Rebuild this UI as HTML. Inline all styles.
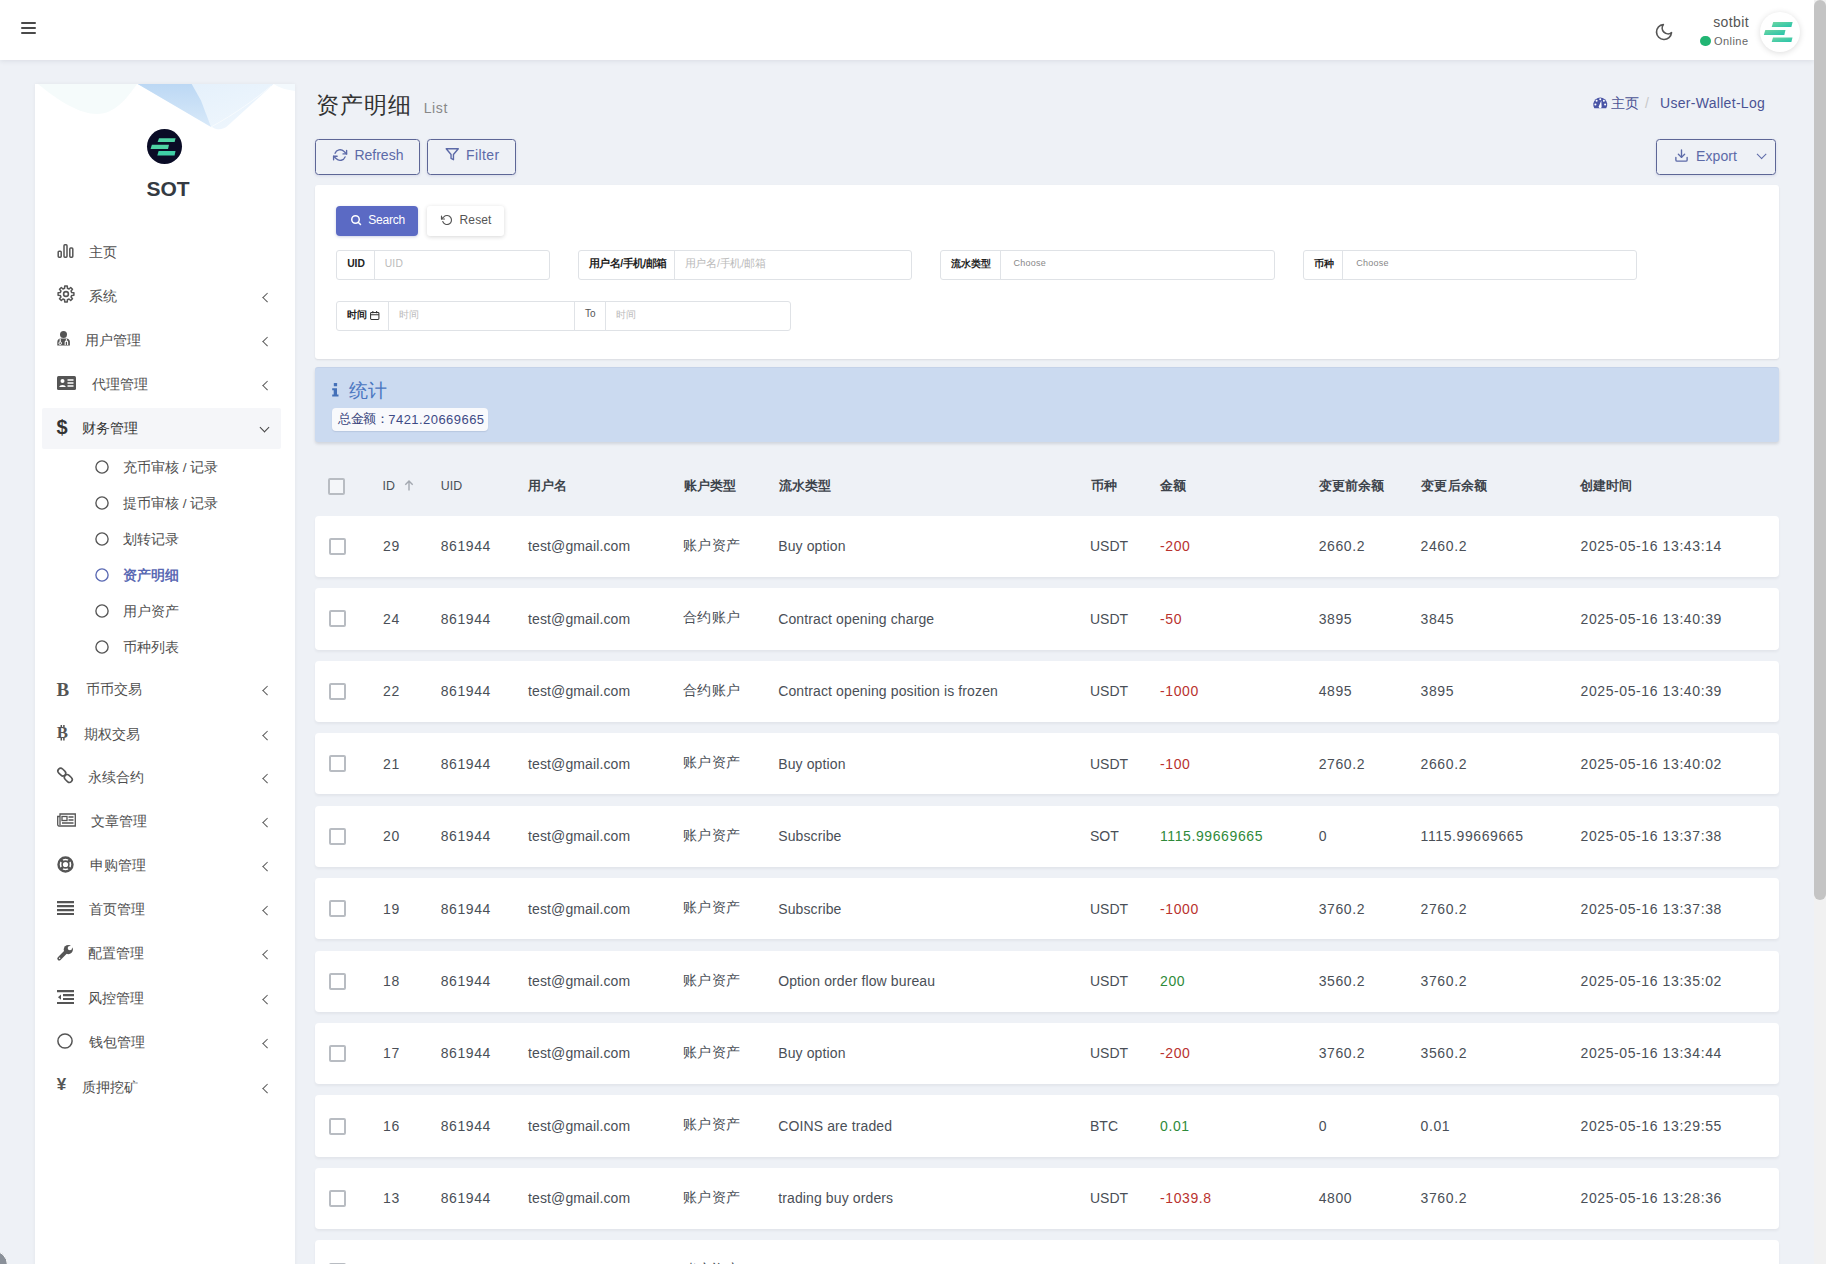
<!DOCTYPE html><html><head><meta charset="utf-8"><style>
*{box-sizing:border-box;margin:0;padding:0}
html,body{width:1826px;height:1264px;overflow:hidden}
body{background:#eef1f6;font-family:"Liberation Sans",sans-serif;font-size:14px;color:#414750;position:relative}
.a{position:absolute}
.t{position:absolute;white-space:nowrap;line-height:1}
.num{letter-spacing:.6px}
svg{position:absolute;overflow:visible}
</style></head><body>
<div class="a" style="left:0;top:0;width:1814px;height:60px;background:#fff;box-shadow:0 1px 5px rgba(40,50,70,.10)"></div>
<div class="a" style="left:21px;top:22px;width:15px;height:2.2px;background:#4a4a4a;border-radius:1px"></div>
<div class="a" style="left:21px;top:27px;width:15px;height:2.2px;background:#4a4a4a;border-radius:1px"></div>
<div class="a" style="left:21px;top:32px;width:15px;height:2.2px;background:#4a4a4a;border-radius:1px"></div>
<svg style="left:1653.5px;top:22.3px" width="20" height="20" viewBox="0 0 24 24"><path d="M21 12.79A9 9 0 1 1 11.21 3 7 7 0 0 0 21 12.79z" fill="none" stroke="#555" stroke-width="2" stroke-linejoin="round"/></svg>
<span class="t" style="top:15.35px;font-size:14px;right:77px;color:#555;letter-spacing:.4px;">sotbit</span>
<div class="a" style="left:1700px;top:35.5px;width:10.5px;height:10.5px;border-radius:50%;background:#21b573"></div>
<span class="t" style="top:36.29px;font-size:11px;right:77.5px;color:#666;letter-spacing:.45px;">Online</span>
<div class="a" style="left:1760px;top:12px;width:40px;height:40px;border-radius:50%;background:#fff;box-shadow:0 1px 6px rgba(0,0,0,.14)"></div>
<svg style="left:1760px;top:12px" width="40" height="40" viewBox="0 0 40 40">
<defs><linearGradient id="gg" x1="0" y1="0" x2="1" y2="1"><stop offset="0" stop-color="#6fd6a2"/><stop offset="1" stop-color="#25c3ab"/></linearGradient></defs>
<path d="M13.2 10 H32.6 L31.4 15.1 H11.7 Z" fill="url(#gg)"/>
<path d="M5.3 17.9 H25.5 L24.3 23 H3.8 Z" fill="url(#gg)"/>
<path d="M13 25.6 H32.5 L31.4 30 H11.7 Z" fill="url(#gg)"/>
</svg>
<div class="a" style="left:1814px;top:0;width:12px;height:1264px;background:#f1f1f1"></div>
<div class="a" style="left:1814px;top:0;width:12px;height:900px;background:#c4c4c4;border-radius:6px"></div>
<div class="a" style="left:35px;top:84px;width:260px;height:1190px;background:#fff;box-shadow:0 0 4px rgba(0,0,0,.05)"></div>
<svg style="left:35px;top:84px" width="260" height="52" viewBox="0 0 260 52">
<defs>
<linearGradient id="wd" x1="0" y1="0" x2="0" y2="1"><stop offset="0" stop-color="#bcd8f4"/><stop offset="1" stop-color="#d8e9f9"/></linearGradient>
<linearGradient id="wl" x1="0" y1="0" x2="1" y2="1"><stop offset="0" stop-color="#e2effb"/><stop offset="1" stop-color="#f0f7fd"/></linearGradient>
<filter id="bl"><feGaussianBlur stdDeviation=".45"/></filter>
</defs>
<path d="M3 0 C25 18 45 30 62 30 C80 30 92 14 102 0 Z" fill="#f5fbfb"/>
<path filter="url(#bl)" d="M102.7 0 L177 43 C182 46.5 188 46 193 41.5 L238.6 0 Z" fill="url(#wl)"/>
<path filter="url(#bl)" d="M102.7 0 L156.7 0 L166 16.6 L176 43 Z" fill="url(#wd)"/>
<path d="M176 43 C200 30 222 14 236 2" fill="none" stroke="#f7fbfe" stroke-width="1"/>
<path d="M238.6 0 C245 4 252 6 260 7 V0Z" fill="#f3f9fd"/>
</svg>
<svg style="left:146.8px;top:129px" width="35" height="35" viewBox="0 0 35 35">
<circle cx="17.5" cy="17.5" r="17.5" fill="#0a0c26"/>
<path d="M12 9.3 H28.6 L27.6 13 H10.6 Z" fill="#4fd3a4"/>
<path d="M4.9 15.7 H22 L21 20 H3.6 Z" fill="#4fd3a4"/>
<path d="M11.6 22 H28.5 L27.6 26.4 H10.3 Z" fill="#3fcfa6"/>
</svg>
<span class="t" style="top:178.02px;font-size:21px;left:146.5px;color:#343a42;font-weight:bold;">SOT</span>
<div class="a" style="left:42px;top:408px;width:239px;height:41px;background:#f5f6f9;border-radius:2px"></div>
<svg style="left:57px;top:243.5px" width="17" height="15" viewBox="0 0 17 15"><g fill="none" stroke="#555" stroke-width="1.5"><rect x="1.2" y="7.2" width="3" height="6" rx=".9"/><rect x="7" y=".8" width="3" height="12.4" rx=".9"/><rect x="12.8" y="4.1" width="3" height="9.1" rx=".9"/></g></svg>
<span class="t" style="top:246.07px;font-size:13.5px;left:89.0px;color:#4f4f4f;">主页</span>
<svg style="left:56.5px;top:285.3px" width="18" height="18" viewBox="0 0 18 18"><path fill="none" stroke="#555" stroke-width="1.5" stroke-linejoin="round" d="M7.60 3.27 L7.73 1.10 L10.27 1.10 L10.40 3.27 L12.06 3.96 L13.68 2.51 L15.49 4.32 L14.04 5.94 L14.73 7.60 L16.90 7.73 L16.90 10.27 L14.73 10.40 L14.04 12.06 L15.49 13.68 L13.68 15.49 L12.06 14.04 L10.40 14.73 L10.27 16.90 L7.73 16.90 L7.60 14.73 L5.94 14.04 L4.32 15.49 L2.51 13.68 L3.96 12.06 L3.27 10.40 L1.10 10.27 L1.10 7.73 L3.27 7.60 L3.96 5.94 L2.51 4.32 L4.32 2.51 L5.94 3.96Z"/><circle cx="9" cy="9" r="2.4" fill="none" stroke="#555" stroke-width="1.6"/></svg>
<span class="t" style="top:290.07px;font-size:13.5px;left:89.0px;color:#4f4f4f;">系统</span>
<div class="a" style="left:263.5px;top:294.0px;width:6.5px;height:6.5px;border-left:1.4px solid #555;border-bottom:1.4px solid #555;transform:rotate(45deg)"></div>
<svg style="left:57px;top:331.0px" width="14" height="15" viewBox="0 0 14 15"><circle cx="6.5" cy="3.6" r="3.5" fill="#555"/><path d="M0.3 14.5 V11 C0.3 8.8 1.8 7.6 3.6 7.6 H9.6 C11.4 7.6 12.9 8.8 12.9 11 V14.5 Z" fill="#555"/><path d="M3.2 7.8 V11" stroke="#fff" stroke-width="1.1" fill="none"/><circle cx="3.2" cy="12.2" r="1.3" fill="none" stroke="#fff" stroke-width="1"/><path d="M8.2 14 V11 C8.2 9.8 10.6 9.8 10.6 11 V14" stroke="#fff" stroke-width="1.1" fill="none"/><path d="M9.4 7.8V9.8" stroke="#fff" stroke-width="1"/></svg>
<span class="t" style="top:334.07px;font-size:13.5px;left:85.3px;color:#4f4f4f;">用户管理</span>
<div class="a" style="left:263.5px;top:338.0px;width:6.5px;height:6.5px;border-left:1.4px solid #555;border-bottom:1.4px solid #555;transform:rotate(45deg)"></div>
<svg style="left:57px;top:376.0px" width="19" height="14" viewBox="0 0 19 14"><rect x="0" y="0" width="19" height="14" rx="1.5" fill="#555"/><circle cx="5.5" cy="5" r="2" fill="#fff"/><path d="M2.2 11 C2.5 8.3 8.5 8.3 8.8 11 Z" fill="#fff"/><path d="M10.5 4h6M10.5 7h6M10.5 10h6" stroke="#fff" stroke-width="1.3"/></svg>
<span class="t" style="top:378.07px;font-size:13.5px;left:91.7px;color:#4f4f4f;">代理管理</span>
<div class="a" style="left:263.5px;top:382.0px;width:6.5px;height:6.5px;border-left:1.4px solid #555;border-bottom:1.4px solid #555;transform:rotate(45deg)"></div>
<span class="t" style="left:56.5px;top:417.0px;font-size:20px;font-weight:bold;color:#333">$</span>
<span class="t" style="top:422.07px;font-size:13.5px;left:81.7px;color:#333;">财务管理</span>
<div class="a" style="left:260.5px;top:423.5px;width:7px;height:7px;border-left:1.4px solid #444;border-bottom:1.4px solid #444;transform:rotate(-45deg)"></div>
<span class="t" style="left:56.5px;top:680.0px;font-size:19px;font-weight:bold;color:#555;font-family:'Liberation Serif',serif">B</span>
<span class="t" style="top:683.07px;font-size:13.5px;left:85.8px;color:#4f4f4f;">币币交易</span>
<div class="a" style="left:263.5px;top:687.0px;width:6.5px;height:6.5px;border-left:1.4px solid #555;border-bottom:1.4px solid #555;transform:rotate(45deg)"></div>
<svg style="left:57px;top:724.8px" width="13" height="16" viewBox="0 0 13 16"><text x="-0.3" y="13.2" font-family="Liberation Serif" font-weight="bold" font-size="16.8" fill="#555">B</text><path d="M4.3 0v2.6M6.9 0v2.6M4.3 13V15.5M6.9 13V15.5" stroke="#555" stroke-width="1.5"/></svg>
<span class="t" style="top:727.57px;font-size:13.5px;left:84.0px;color:#4f4f4f;">期权交易</span>
<div class="a" style="left:263.5px;top:731.5px;width:6.5px;height:6.5px;border-left:1.4px solid #555;border-bottom:1.4px solid #555;transform:rotate(45deg)"></div>
<svg style="left:57px;top:767.0px" width="16" height="17" viewBox="0 0 16 17"><g fill="none" stroke="#555" stroke-width="1.6"><rect x="0.5" y="2.3" width="8.6" height="5.6" rx="2.8" transform="rotate(43 4.8 5.1)"/><rect x="7" y="8.7" width="8.6" height="5.6" rx="2.8" transform="rotate(43 11.3 11.5)"/></g></svg>
<span class="t" style="top:771.07px;font-size:13.5px;left:87.5px;color:#4f4f4f;">永续合约</span>
<div class="a" style="left:263.5px;top:775.0px;width:6.5px;height:6.5px;border-left:1.4px solid #555;border-bottom:1.4px solid #555;transform:rotate(45deg)"></div>
<svg style="left:57px;top:813.4px" width="19" height="14" viewBox="0 0 19 14"><g fill="none" stroke="#555" stroke-width="1.3"><path d="M3 1h15.3v12H2 C1.2 13 .7 12.4 .7 11.6V3.5H3Z M3 3.5 V12"/><rect x="5" y="3.5" width="5" height="4"/><path d="M11.5 4h5M11.5 7h5M5 10h11.5"/></g></svg>
<span class="t" style="top:815.47px;font-size:13.5px;left:91.0px;color:#4f4f4f;">文章管理</span>
<div class="a" style="left:263.5px;top:819.4px;width:6.5px;height:6.5px;border-left:1.4px solid #555;border-bottom:1.4px solid #555;transform:rotate(45deg)"></div>
<svg style="left:57px;top:856.0px" width="17" height="17" viewBox="0 0 17 17"><circle cx="8.5" cy="8.5" r="7" fill="none" stroke="#555" stroke-width="2.4"/><circle cx="8.5" cy="8.5" r="3.4" fill="none" stroke="#555" stroke-width="1.6"/><path d="M3.5 3.5l2.6 2.6M13.5 3.5l-2.6 2.6M3.5 13.5l2.6-2.6M13.5 13.5l-2.6-2.6" stroke="#555" stroke-width="2.6"/></svg>
<span class="t" style="top:859.07px;font-size:13.5px;left:90.1px;color:#4f4f4f;">申购管理</span>
<div class="a" style="left:263.5px;top:863.0px;width:6.5px;height:6.5px;border-left:1.4px solid #555;border-bottom:1.4px solid #555;transform:rotate(45deg)"></div>
<svg style="left:57px;top:901.0px" width="17" height="14" viewBox="0 0 17 14"><path d="M0 1.2h17M0 5.2h17M0 9.2h17M0 13h17" stroke="#555" stroke-width="2.2"/></svg>
<span class="t" style="top:903.07px;font-size:13.5px;left:89.0px;color:#4f4f4f;">首页管理</span>
<div class="a" style="left:263.5px;top:907.0px;width:6.5px;height:6.5px;border-left:1.4px solid #555;border-bottom:1.4px solid #555;transform:rotate(45deg)"></div>
<svg style="left:57px;top:943.5px" width="17" height="17" viewBox="0 0 17 17"><path d="M2.2 14.6 L8.6 8.2" stroke="#555" stroke-width="3.8" stroke-linecap="round"/><circle cx="11.3" cy="5.6" r="4.6" fill="#555"/><circle cx="12.9" cy="4.1" r="2.2" fill="#fff"/><path d="M12.2 3.4 L15 -0.5 L17.5 2.5 L13.6 4.8Z" fill="#fff"/><circle cx="2.6" cy="14.2" r=".75" fill="#fff"/></svg>
<span class="t" style="top:947.07px;font-size:13.5px;left:88.1px;color:#4f4f4f;">配置管理</span>
<div class="a" style="left:263.5px;top:951.0px;width:6.5px;height:6.5px;border-left:1.4px solid #555;border-bottom:1.4px solid #555;transform:rotate(45deg)"></div>
<svg style="left:57px;top:990.0px" width="17" height="14" viewBox="0 0 17 14"><path d="M0 1.2h17M6 5.2h11M6 9h11M0 13h17" stroke="#555" stroke-width="2.2"/><path d="M4 4.5 L1 7.2 L4 9.8Z" fill="#555"/></svg>
<span class="t" style="top:992.07px;font-size:13.5px;left:88.1px;color:#4f4f4f;">风控管理</span>
<div class="a" style="left:263.5px;top:996.0px;width:6.5px;height:6.5px;border-left:1.4px solid #555;border-bottom:1.4px solid #555;transform:rotate(45deg)"></div>
<svg style="left:57px;top:1033.0px" width="16" height="16" viewBox="0 0 16 16"><circle cx="8" cy="8" r="7.1" fill="none" stroke="#555" stroke-width="1.5"/></svg>
<span class="t" style="top:1036.07px;font-size:13.5px;left:89.0px;color:#4f4f4f;">钱包管理</span>
<div class="a" style="left:263.5px;top:1040.0px;width:6.5px;height:6.5px;border-left:1.4px solid #555;border-bottom:1.4px solid #555;transform:rotate(45deg)"></div>
<span class="t" style="left:56.8px;top:1076.0px;font-size:17px;font-weight:bold;color:#555">&#165;</span>
<span class="t" style="top:1080.57px;font-size:13.5px;left:81.7px;color:#4f4f4f;">质押挖矿</span>
<div class="a" style="left:263.5px;top:1084.5px;width:6.5px;height:6.5px;border-left:1.4px solid #555;border-bottom:1.4px solid #555;transform:rotate(45deg)"></div>
<svg style="left:94.5px;top:459.5px" width="14" height="14" viewBox="0 0 14 14"><circle cx="7" cy="7" r="6.1" fill="none" stroke="#555" stroke-width="1.35"/></svg>
<span class="t" style="top:460.99px;font-size:13.6px;left:122.9px;color:#4f4f4f;">充币审核 / 记录</span>
<svg style="left:94.5px;top:495.5px" width="14" height="14" viewBox="0 0 14 14"><circle cx="7" cy="7" r="6.1" fill="none" stroke="#555" stroke-width="1.35"/></svg>
<span class="t" style="top:496.99px;font-size:13.6px;left:122.9px;color:#4f4f4f;">提币审核 / 记录</span>
<svg style="left:94.5px;top:531.5px" width="14" height="14" viewBox="0 0 14 14"><circle cx="7" cy="7" r="6.1" fill="none" stroke="#555" stroke-width="1.35"/></svg>
<span class="t" style="top:532.99px;font-size:13.6px;left:122.9px;color:#4f4f4f;">划转记录</span>
<svg style="left:94.5px;top:567.5px" width="14" height="14" viewBox="0 0 14 14"><circle cx="7" cy="7" r="6.1" fill="none" stroke="#5a69b3" stroke-width="1.35"/></svg>
<span class="t" style="top:568.99px;font-size:13.6px;left:122.9px;color:#5a69b3;font-weight:bold;">资产明细</span>
<svg style="left:94.5px;top:603.5px" width="14" height="14" viewBox="0 0 14 14"><circle cx="7" cy="7" r="6.1" fill="none" stroke="#555" stroke-width="1.35"/></svg>
<span class="t" style="top:604.99px;font-size:13.6px;left:122.9px;color:#4f4f4f;">用户资产</span>
<svg style="left:94.5px;top:639.5px" width="14" height="14" viewBox="0 0 14 14"><circle cx="7" cy="7" r="6.1" fill="none" stroke="#555" stroke-width="1.35"/></svg>
<span class="t" style="top:640.99px;font-size:13.6px;left:122.9px;color:#4f4f4f;">币种列表</span>
<span class="t" style="top:93.79px;font-size:23.4px;left:316.2px;color:#333;letter-spacing:.9px">资产明细</span>
<span class="t" style="top:101.45px;font-size:14px;left:423.7px;color:#888;letter-spacing:.6px">List</span>
<svg style="left:1592.8px;top:96.8px" width="14.5" height="11.5" viewBox="0 0 14.5 11.5"><path d="M1.3 11.2 A7 7 0 1 1 13.2 11.2 Z" fill="#4a55a6"/><g fill="#fff"><circle cx="7.25" cy="2.3" r="1"/><circle cx="3.6" cy="3.7" r="1"/><circle cx="10.9" cy="3.7" r="1"/><circle cx="2.4" cy="7.4" r="1"/><circle cx="12.1" cy="7.4" r="1"/><path d="M8.3 3.6 L6.2 8.6 A1.5 1.5 0 1 0 8.6 9.2 Z"/></g></svg>
<span class="t" style="top:95.95px;font-size:14px;left:1610.5px;color:#4a5394;">主页</span>
<span class="t" style="top:95.95px;font-size:14px;left:1645px;color:#c8c8c8;">/</span>
<span class="t" style="top:95.95px;font-size:14px;left:1660px;color:#4a5394;letter-spacing:.3px">User-Wallet-Log</span>
<div class="a" style="left:315px;top:139px;width:105px;height:36px;border:1px solid #5d6696;border-radius:3.5px;box-shadow:0 1px 3px rgba(80,90,160,.15)"></div>
<svg style="left:333px;top:148.3px" width="14.2" height="14.2" viewBox="0 0 24 24"><g fill="none" stroke="#5c6aa8" stroke-width="2.3" stroke-linecap="round" stroke-linejoin="round"><polyline points="23 4 23 10 17 10"/><polyline points="1 20 1 14 7 14"/><path d="M3.51 9a9 9 0 0 1 14.85-3.36L23 10M1 14l4.64 4.36A9 9 0 0 0 20.49 15"/></g></svg>
<span class="t" style="top:148.15px;font-size:14px;left:354.4px;color:#5c6aa8;">Refresh</span>
<div class="a" style="left:427px;top:139px;width:89px;height:36px;border:1px solid #5d6696;border-radius:3.5px;box-shadow:0 1px 3px rgba(80,90,160,.15)"></div>
<svg style="left:444.5px;top:146.8px" width="14.5" height="14.5" viewBox="0 0 24 24"><g fill="none" stroke="#5c6aa8" stroke-width="2.3" stroke-linecap="round" stroke-linejoin="round"><polygon points="22 3 2 3 10 12.46 10 19 14 21 14 12.46 22 3"/></g></svg>
<span class="t" style="top:148.15px;font-size:14px;left:466px;color:#5c6aa8;letter-spacing:.4px">Filter</span>
<div class="a" style="left:1656px;top:139px;width:120px;height:36px;border:1px solid #5d6696;border-radius:3.5px;box-shadow:0 1px 3px rgba(80,90,160,.15)"></div>
<svg style="left:1673.5px;top:147.5px" width="15" height="15" viewBox="0 0 24 24"><g fill="none" stroke="#5c6aa8" stroke-width="2.2" stroke-linecap="round" stroke-linejoin="round"><path d="M21 15v4a2 2 0 0 1-2 2H5a2 2 0 0 1-2-2v-4"/><polyline points="7 10 12 15 17 10"/><line x1="12" y1="15" x2="12" y2="3"/></g></svg>
<span class="t" style="top:149.15px;font-size:14px;left:1696px;color:#5c6aa8;letter-spacing:.1px">Export</span>
<div class="a" style="left:1758px;top:151px;width:6.5px;height:6.5px;border-left:1.4px solid #5c6aa8;border-bottom:1.4px solid #5c6aa8;transform:rotate(-45deg)"></div>
<div class="a" style="left:315px;top:185px;width:1464px;height:174px;background:#fff;border-radius:3px;box-shadow:0 1px 2px rgba(0,0,0,.09)"></div>
<div class="a" style="left:336px;top:206px;width:82px;height:30px;background:#5b6ac4;border-radius:4px;box-shadow:0 1px 3px rgba(60,70,150,.25)"></div>
<svg style="left:349.5px;top:214.3px" width="12" height="12" viewBox="0 0 24 24"><g fill="none" stroke="#fff" stroke-width="3" stroke-linecap="round" stroke-linejoin="round"><circle cx="11" cy="11" r="7.5"/><line x1="21" y1="21" x2="16.4" y2="16.4"/></g></svg>
<span class="t" style="top:213.94px;font-size:12px;left:368.2px;color:#fff;letter-spacing:-.2px">Search</span>
<div class="a" style="left:427px;top:206px;width:77px;height:30px;background:#fff;border-radius:3px;box-shadow:0 1px 4px rgba(0,0,0,.16)"></div>
<svg style="left:440.6px;top:213.5px" width="12" height="12" viewBox="0 0 24 24"><g fill="none" stroke="#555" stroke-width="2.3" stroke-linecap="round" stroke-linejoin="round"><polyline points="1 4 1 10 7 10"/><path d="M3.51 15a9 9 0 1 0 2.13-9.36L1 10"/></g></svg>
<span class="t" style="top:213.94px;font-size:12px;left:459.6px;color:#555;letter-spacing:.1px">Reset</span>
<div class="a" style="left:336px;top:250px;width:214px;height:30px;border:1px solid #dfe2e6;border-radius:3px"></div>
<div class="a" style="left:374px;top:250px;width:1px;height:30px;background:#e0e3e7"></div>
<span class="t" style="top:259.48px;font-size:10.3px;left:347.2px;color:#222;font-weight:bold;">UID</span>
<span class="t" style="top:259.48px;font-size:10.3px;left:384.7px;color:#bbb;letter-spacing:.2px">UID</span>
<div class="a" style="left:578px;top:250px;width:334px;height:30px;border:1px solid #dfe2e6;border-radius:3px"></div>
<div class="a" style="left:674px;top:250px;width:1px;height:30px;background:#e0e3e7"></div>
<span class="t" style="top:258.41px;font-size:10.5px;left:589px;color:#222;font-weight:bold;letter-spacing:-.6px">用户名/手机/邮箱</span>
<span class="t" style="top:258.41px;font-size:10.5px;left:684.5px;color:#bbb;letter-spacing:-.2px">用户名/手机/邮箱</span>
<div class="a" style="left:940px;top:250px;width:335px;height:30px;border:1px solid #dfe2e6;border-radius:3px"></div>
<div class="a" style="left:1000px;top:250px;width:1px;height:30px;background:#e0e3e7"></div>
<span class="t" style="top:258.54px;font-size:10px;left:951.2px;color:#222;font-weight:bold;">流水类型</span>
<span class="t" style="top:259.28px;font-size:9px;left:1013.5px;color:#888;letter-spacing:.25px">Choose</span>
<div class="a" style="left:1303px;top:250px;width:334px;height:30px;border:1px solid #dfe2e6;border-radius:3px"></div>
<div class="a" style="left:1342px;top:250px;width:1px;height:30px;background:#e0e3e7"></div>
<span class="t" style="top:258.54px;font-size:10px;left:1313.9px;color:#222;font-weight:bold;">币种</span>
<span class="t" style="top:259.28px;font-size:9px;left:1356.3px;color:#888;letter-spacing:.25px">Choose</span>
<div class="a" style="left:336px;top:301px;width:455px;height:30px;border:1px solid #dfe2e6;border-radius:3px"></div>
<div class="a" style="left:388px;top:301px;width:1px;height:30px;background:#e0e3e7"></div>
<div class="a" style="left:574px;top:301px;width:1px;height:30px;background:#e0e3e7"></div>
<div class="a" style="left:605px;top:301px;width:1px;height:30px;background:#e0e3e7"></div>
<span class="t" style="top:309.54px;font-size:10px;left:347.2px;color:#222;font-weight:bold;">时间</span>
<svg style="left:369.8px;top:310.8px" width="9.5" height="9" viewBox="0 0 10 9.5"><rect x=".6" y="1.5" width="8.8" height="7.4" rx="1" fill="none" stroke="#333" stroke-width="1.1"/><path d="M.6 4h8.8M3 0v2.5M7 0v2.5" stroke="#333" stroke-width="1.1"/></svg>
<span class="t" style="top:309.94px;font-size:10px;left:398.9px;color:#bbb;">时间</span>
<span class="t" style="top:308.84px;font-size:10px;left:585px;color:#555;">To</span>
<span class="t" style="top:309.94px;font-size:10px;left:615.6px;color:#bbb;">时间</span>
<div class="a" style="left:315px;top:367px;width:1464px;height:75px;background:#cbdaf0;border-radius:3px;box-shadow:0 2px 3px rgba(60,70,90,.16),inset 0 1px 0 rgba(110,120,140,.07)"></div>
<svg style="left:332px;top:383.3px" width="7" height="14" viewBox="0 0 7 14"><rect x="1.8" y="0" width="3.3" height="3.3" rx=".5" fill="#4470b8"/><path d="M.2 5.2 H5 V11.6 H6.5 V13.6 H.2 V11.6 H1.7 V7.2 H.2Z" fill="#4470b8"/></svg>
<span class="t" style="top:382.34px;font-size:18.5px;left:348.6px;color:#4a76c0;">统计</span>
<div class="a" style="left:332px;top:408.3px;width:156px;height:23px;background:#f8f9fc;border-radius:4px;box-shadow:0 1px 1px rgba(40,60,110,.12)"></div>
<span class="t" style="top:412.93px;font-size:12.6px;left:337.8px;color:#36427a;letter-spacing:-.2px">总金额：</span>
<span class="t" style="top:412.60px;font-size:13px;left:388.3px;color:#3d4a85;letter-spacing:.45px">7421.20669665</span>
<div class="a" style="left:328px;top:478px;width:17px;height:17px;border:2px solid #b8bcc2;border-radius:2px;background:#f4f6f9"></div>
<span class="t" style="top:480.10px;font-size:12.4px;left:382.4px;color:#4a5058;letter-spacing:.1px">ID</span>
<span class="t" style="top:480.10px;font-size:12.4px;left:440.7px;color:#4a5058;letter-spacing:.1px">UID</span>
<span class="t" style="top:479.82px;font-size:12.5px;left:528.0999999999999px;color:#3d434b;font-weight:bold;letter-spacing:.1px">用户名</span>
<span class="t" style="top:479.82px;font-size:12.5px;left:683.8px;color:#3d434b;font-weight:bold;letter-spacing:.1px">账户类型</span>
<span class="t" style="top:479.82px;font-size:12.5px;left:778.8px;color:#3d434b;font-weight:bold;letter-spacing:.1px">流水类型</span>
<span class="t" style="top:479.82px;font-size:12.5px;left:1090.8px;color:#3d434b;font-weight:bold;letter-spacing:.1px">币种</span>
<span class="t" style="top:479.82px;font-size:12.5px;left:1160.0px;color:#3d434b;font-weight:bold;letter-spacing:.1px">金额</span>
<span class="t" style="top:479.82px;font-size:12.5px;left:1318.7px;color:#3d434b;font-weight:bold;letter-spacing:.1px">变更前余额</span>
<span class="t" style="top:479.82px;font-size:12.5px;left:1421.3999999999999px;color:#3d434b;font-weight:bold;letter-spacing:.1px">变更后余额</span>
<span class="t" style="top:479.82px;font-size:12.5px;left:1579.8px;color:#3d434b;font-weight:bold;letter-spacing:.1px">创建时间</span>
<svg style="left:404px;top:479.5px" width="10" height="11" viewBox="0 0 10 11"><path d="M5 10.5 V1 M1.3 4.7 L5 1 L8.7 4.7" fill="none" stroke="#a3a8b0" stroke-width="1.4"/></svg>
<div class="a" style="left:315px;top:515.80px;width:1464px;height:61.3px;background:#fff;border-radius:4px;box-shadow:0 2px 3px rgba(30,40,60,.055)"></div>
<div class="a" style="left:329px;top:538.00px;width:17px;height:17px;border:2px solid #b8bcc2;border-radius:2px"></div>
<span class="t num" style="top:539.25px;font-size:14px;left:383px;color:#4a4f57;">29</span>
<span class="t num" style="top:539.25px;font-size:14px;left:440.7px;color:#4a4f57;">861944</span>
<span class="t" style="top:539.25px;font-size:14px;left:528px;color:#4a4f57;letter-spacing:.12px">test@gmail.com</span>
<span class="t" style="top:538.87px;font-size:13.5px;left:683px;color:#4a4f57;letter-spacing:.3px">账户资产</span>
<span class="t" style="top:539.25px;font-size:14px;left:778.2px;color:#4a4f57;letter-spacing:.12px">Buy option</span>
<span class="t" style="top:539.25px;font-size:14px;left:1090px;color:#4a4f57;">USDT</span>
<span class="t num" style="top:539.25px;font-size:14px;left:1160px;color:#b9322e;">-200</span>
<span class="t num" style="top:539.25px;font-size:14px;left:1318.7px;color:#4a4f57;">2660.2</span>
<span class="t num" style="top:539.25px;font-size:14px;left:1420.6px;color:#4a4f57;">2460.2</span>
<span class="t num" style="top:539.25px;font-size:14px;left:1580.5px;color:#4a4f57;">2025-05-16 13:43:14</span>
<div class="a" style="left:315px;top:588.25px;width:1464px;height:61.3px;background:#fff;border-radius:4px;box-shadow:0 2px 3px rgba(30,40,60,.055)"></div>
<div class="a" style="left:329px;top:610.45px;width:17px;height:17px;border:2px solid #b8bcc2;border-radius:2px"></div>
<span class="t num" style="top:611.70px;font-size:14px;left:383px;color:#4a4f57;">24</span>
<span class="t num" style="top:611.70px;font-size:14px;left:440.7px;color:#4a4f57;">861944</span>
<span class="t" style="top:611.70px;font-size:14px;left:528px;color:#4a4f57;letter-spacing:.12px">test@gmail.com</span>
<span class="t" style="top:611.32px;font-size:13.5px;left:683px;color:#4a4f57;letter-spacing:.3px">合约账户</span>
<span class="t" style="top:611.70px;font-size:14px;left:778.2px;color:#4a4f57;letter-spacing:.12px">Contract opening charge</span>
<span class="t" style="top:611.70px;font-size:14px;left:1090px;color:#4a4f57;">USDT</span>
<span class="t num" style="top:611.70px;font-size:14px;left:1160px;color:#b9322e;">-50</span>
<span class="t num" style="top:611.70px;font-size:14px;left:1318.7px;color:#4a4f57;">3895</span>
<span class="t num" style="top:611.70px;font-size:14px;left:1420.6px;color:#4a4f57;">3845</span>
<span class="t num" style="top:611.70px;font-size:14px;left:1580.5px;color:#4a4f57;">2025-05-16 13:40:39</span>
<div class="a" style="left:315px;top:660.70px;width:1464px;height:61.3px;background:#fff;border-radius:4px;box-shadow:0 2px 3px rgba(30,40,60,.055)"></div>
<div class="a" style="left:329px;top:682.90px;width:17px;height:17px;border:2px solid #b8bcc2;border-radius:2px"></div>
<span class="t num" style="top:684.15px;font-size:14px;left:383px;color:#4a4f57;">22</span>
<span class="t num" style="top:684.15px;font-size:14px;left:440.7px;color:#4a4f57;">861944</span>
<span class="t" style="top:684.15px;font-size:14px;left:528px;color:#4a4f57;letter-spacing:.12px">test@gmail.com</span>
<span class="t" style="top:683.77px;font-size:13.5px;left:683px;color:#4a4f57;letter-spacing:.3px">合约账户</span>
<span class="t" style="top:684.15px;font-size:14px;left:778.2px;color:#4a4f57;letter-spacing:.12px">Contract opening position is frozen</span>
<span class="t" style="top:684.15px;font-size:14px;left:1090px;color:#4a4f57;">USDT</span>
<span class="t num" style="top:684.15px;font-size:14px;left:1160px;color:#b9322e;">-1000</span>
<span class="t num" style="top:684.15px;font-size:14px;left:1318.7px;color:#4a4f57;">4895</span>
<span class="t num" style="top:684.15px;font-size:14px;left:1420.6px;color:#4a4f57;">3895</span>
<span class="t num" style="top:684.15px;font-size:14px;left:1580.5px;color:#4a4f57;">2025-05-16 13:40:39</span>
<div class="a" style="left:315px;top:733.15px;width:1464px;height:61.3px;background:#fff;border-radius:4px;box-shadow:0 2px 3px rgba(30,40,60,.055)"></div>
<div class="a" style="left:329px;top:755.35px;width:17px;height:17px;border:2px solid #b8bcc2;border-radius:2px"></div>
<span class="t num" style="top:756.60px;font-size:14px;left:383px;color:#4a4f57;">21</span>
<span class="t num" style="top:756.60px;font-size:14px;left:440.7px;color:#4a4f57;">861944</span>
<span class="t" style="top:756.60px;font-size:14px;left:528px;color:#4a4f57;letter-spacing:.12px">test@gmail.com</span>
<span class="t" style="top:756.22px;font-size:13.5px;left:683px;color:#4a4f57;letter-spacing:.3px">账户资产</span>
<span class="t" style="top:756.60px;font-size:14px;left:778.2px;color:#4a4f57;letter-spacing:.12px">Buy option</span>
<span class="t" style="top:756.60px;font-size:14px;left:1090px;color:#4a4f57;">USDT</span>
<span class="t num" style="top:756.60px;font-size:14px;left:1160px;color:#b9322e;">-100</span>
<span class="t num" style="top:756.60px;font-size:14px;left:1318.7px;color:#4a4f57;">2760.2</span>
<span class="t num" style="top:756.60px;font-size:14px;left:1420.6px;color:#4a4f57;">2660.2</span>
<span class="t num" style="top:756.60px;font-size:14px;left:1580.5px;color:#4a4f57;">2025-05-16 13:40:02</span>
<div class="a" style="left:315px;top:805.60px;width:1464px;height:61.3px;background:#fff;border-radius:4px;box-shadow:0 2px 3px rgba(30,40,60,.055)"></div>
<div class="a" style="left:329px;top:827.80px;width:17px;height:17px;border:2px solid #b8bcc2;border-radius:2px"></div>
<span class="t num" style="top:829.05px;font-size:14px;left:383px;color:#4a4f57;">20</span>
<span class="t num" style="top:829.05px;font-size:14px;left:440.7px;color:#4a4f57;">861944</span>
<span class="t" style="top:829.05px;font-size:14px;left:528px;color:#4a4f57;letter-spacing:.12px">test@gmail.com</span>
<span class="t" style="top:828.67px;font-size:13.5px;left:683px;color:#4a4f57;letter-spacing:.3px">账户资产</span>
<span class="t" style="top:829.05px;font-size:14px;left:778.2px;color:#4a4f57;letter-spacing:.12px">Subscribe</span>
<span class="t" style="top:829.05px;font-size:14px;left:1090px;color:#4a4f57;">SOT</span>
<span class="t num" style="top:829.05px;font-size:14px;left:1160px;color:#2f8a3a;">1115.99669665</span>
<span class="t num" style="top:829.05px;font-size:14px;left:1318.7px;color:#4a4f57;">0</span>
<span class="t num" style="top:829.05px;font-size:14px;left:1420.6px;color:#4a4f57;">1115.99669665</span>
<span class="t num" style="top:829.05px;font-size:14px;left:1580.5px;color:#4a4f57;">2025-05-16 13:37:38</span>
<div class="a" style="left:315px;top:878.05px;width:1464px;height:61.3px;background:#fff;border-radius:4px;box-shadow:0 2px 3px rgba(30,40,60,.055)"></div>
<div class="a" style="left:329px;top:900.25px;width:17px;height:17px;border:2px solid #b8bcc2;border-radius:2px"></div>
<span class="t num" style="top:901.50px;font-size:14px;left:383px;color:#4a4f57;">19</span>
<span class="t num" style="top:901.50px;font-size:14px;left:440.7px;color:#4a4f57;">861944</span>
<span class="t" style="top:901.50px;font-size:14px;left:528px;color:#4a4f57;letter-spacing:.12px">test@gmail.com</span>
<span class="t" style="top:901.12px;font-size:13.5px;left:683px;color:#4a4f57;letter-spacing:.3px">账户资产</span>
<span class="t" style="top:901.50px;font-size:14px;left:778.2px;color:#4a4f57;letter-spacing:.12px">Subscribe</span>
<span class="t" style="top:901.50px;font-size:14px;left:1090px;color:#4a4f57;">USDT</span>
<span class="t num" style="top:901.50px;font-size:14px;left:1160px;color:#b9322e;">-1000</span>
<span class="t num" style="top:901.50px;font-size:14px;left:1318.7px;color:#4a4f57;">3760.2</span>
<span class="t num" style="top:901.50px;font-size:14px;left:1420.6px;color:#4a4f57;">2760.2</span>
<span class="t num" style="top:901.50px;font-size:14px;left:1580.5px;color:#4a4f57;">2025-05-16 13:37:38</span>
<div class="a" style="left:315px;top:950.50px;width:1464px;height:61.3px;background:#fff;border-radius:4px;box-shadow:0 2px 3px rgba(30,40,60,.055)"></div>
<div class="a" style="left:329px;top:972.70px;width:17px;height:17px;border:2px solid #b8bcc2;border-radius:2px"></div>
<span class="t num" style="top:973.95px;font-size:14px;left:383px;color:#4a4f57;">18</span>
<span class="t num" style="top:973.95px;font-size:14px;left:440.7px;color:#4a4f57;">861944</span>
<span class="t" style="top:973.95px;font-size:14px;left:528px;color:#4a4f57;letter-spacing:.12px">test@gmail.com</span>
<span class="t" style="top:973.57px;font-size:13.5px;left:683px;color:#4a4f57;letter-spacing:.3px">账户资产</span>
<span class="t" style="top:973.95px;font-size:14px;left:778.2px;color:#4a4f57;letter-spacing:.12px">Option order flow bureau</span>
<span class="t" style="top:973.95px;font-size:14px;left:1090px;color:#4a4f57;">USDT</span>
<span class="t num" style="top:973.95px;font-size:14px;left:1160px;color:#2f8a3a;">200</span>
<span class="t num" style="top:973.95px;font-size:14px;left:1318.7px;color:#4a4f57;">3560.2</span>
<span class="t num" style="top:973.95px;font-size:14px;left:1420.6px;color:#4a4f57;">3760.2</span>
<span class="t num" style="top:973.95px;font-size:14px;left:1580.5px;color:#4a4f57;">2025-05-16 13:35:02</span>
<div class="a" style="left:315px;top:1022.95px;width:1464px;height:61.3px;background:#fff;border-radius:4px;box-shadow:0 2px 3px rgba(30,40,60,.055)"></div>
<div class="a" style="left:329px;top:1045.15px;width:17px;height:17px;border:2px solid #b8bcc2;border-radius:2px"></div>
<span class="t num" style="top:1046.40px;font-size:14px;left:383px;color:#4a4f57;">17</span>
<span class="t num" style="top:1046.40px;font-size:14px;left:440.7px;color:#4a4f57;">861944</span>
<span class="t" style="top:1046.40px;font-size:14px;left:528px;color:#4a4f57;letter-spacing:.12px">test@gmail.com</span>
<span class="t" style="top:1046.02px;font-size:13.5px;left:683px;color:#4a4f57;letter-spacing:.3px">账户资产</span>
<span class="t" style="top:1046.40px;font-size:14px;left:778.2px;color:#4a4f57;letter-spacing:.12px">Buy option</span>
<span class="t" style="top:1046.40px;font-size:14px;left:1090px;color:#4a4f57;">USDT</span>
<span class="t num" style="top:1046.40px;font-size:14px;left:1160px;color:#b9322e;">-200</span>
<span class="t num" style="top:1046.40px;font-size:14px;left:1318.7px;color:#4a4f57;">3760.2</span>
<span class="t num" style="top:1046.40px;font-size:14px;left:1420.6px;color:#4a4f57;">3560.2</span>
<span class="t num" style="top:1046.40px;font-size:14px;left:1580.5px;color:#4a4f57;">2025-05-16 13:34:44</span>
<div class="a" style="left:315px;top:1095.40px;width:1464px;height:61.3px;background:#fff;border-radius:4px;box-shadow:0 2px 3px rgba(30,40,60,.055)"></div>
<div class="a" style="left:329px;top:1117.60px;width:17px;height:17px;border:2px solid #b8bcc2;border-radius:2px"></div>
<span class="t num" style="top:1118.85px;font-size:14px;left:383px;color:#4a4f57;">16</span>
<span class="t num" style="top:1118.85px;font-size:14px;left:440.7px;color:#4a4f57;">861944</span>
<span class="t" style="top:1118.85px;font-size:14px;left:528px;color:#4a4f57;letter-spacing:.12px">test@gmail.com</span>
<span class="t" style="top:1118.47px;font-size:13.5px;left:683px;color:#4a4f57;letter-spacing:.3px">账户资产</span>
<span class="t" style="top:1118.85px;font-size:14px;left:778.2px;color:#4a4f57;letter-spacing:.12px">COINS are traded</span>
<span class="t" style="top:1118.85px;font-size:14px;left:1090px;color:#4a4f57;">BTC</span>
<span class="t num" style="top:1118.85px;font-size:14px;left:1160px;color:#2f8a3a;">0.01</span>
<span class="t num" style="top:1118.85px;font-size:14px;left:1318.7px;color:#4a4f57;">0</span>
<span class="t num" style="top:1118.85px;font-size:14px;left:1420.6px;color:#4a4f57;">0.01</span>
<span class="t num" style="top:1118.85px;font-size:14px;left:1580.5px;color:#4a4f57;">2025-05-16 13:29:55</span>
<div class="a" style="left:315px;top:1167.85px;width:1464px;height:61.3px;background:#fff;border-radius:4px;box-shadow:0 2px 3px rgba(30,40,60,.055)"></div>
<div class="a" style="left:329px;top:1190.05px;width:17px;height:17px;border:2px solid #b8bcc2;border-radius:2px"></div>
<span class="t num" style="top:1191.30px;font-size:14px;left:383px;color:#4a4f57;">13</span>
<span class="t num" style="top:1191.30px;font-size:14px;left:440.7px;color:#4a4f57;">861944</span>
<span class="t" style="top:1191.30px;font-size:14px;left:528px;color:#4a4f57;letter-spacing:.12px">test@gmail.com</span>
<span class="t" style="top:1190.92px;font-size:13.5px;left:683px;color:#4a4f57;letter-spacing:.3px">账户资产</span>
<span class="t" style="top:1191.30px;font-size:14px;left:778.2px;color:#4a4f57;letter-spacing:.12px">trading buy orders</span>
<span class="t" style="top:1191.30px;font-size:14px;left:1090px;color:#4a4f57;">USDT</span>
<span class="t num" style="top:1191.30px;font-size:14px;left:1160px;color:#b9322e;">-1039.8</span>
<span class="t num" style="top:1191.30px;font-size:14px;left:1318.7px;color:#4a4f57;">4800</span>
<span class="t num" style="top:1191.30px;font-size:14px;left:1420.6px;color:#4a4f57;">3760.2</span>
<span class="t num" style="top:1191.30px;font-size:14px;left:1580.5px;color:#4a4f57;">2025-05-16 13:28:36</span>
<div class="a" style="left:315px;top:1240.30px;width:1464px;height:61.3px;background:#fff;border-radius:4px;box-shadow:0 2px 3px rgba(30,40,60,.055)"></div>
<div class="a" style="left:329px;top:1262.50px;width:17px;height:17px;border:2px solid #b8bcc2;border-radius:2px"></div>
<span class="t" style="top:1263.37px;font-size:13.5px;left:683px;color:#414750;letter-spacing:.3px">账户资产</span>
<div class="a" style="left:-22px;top:1250px;width:30px;height:30px;border-radius:50%;background:#8a9099;border:1.5px solid #fff"></div>
</body></html>
